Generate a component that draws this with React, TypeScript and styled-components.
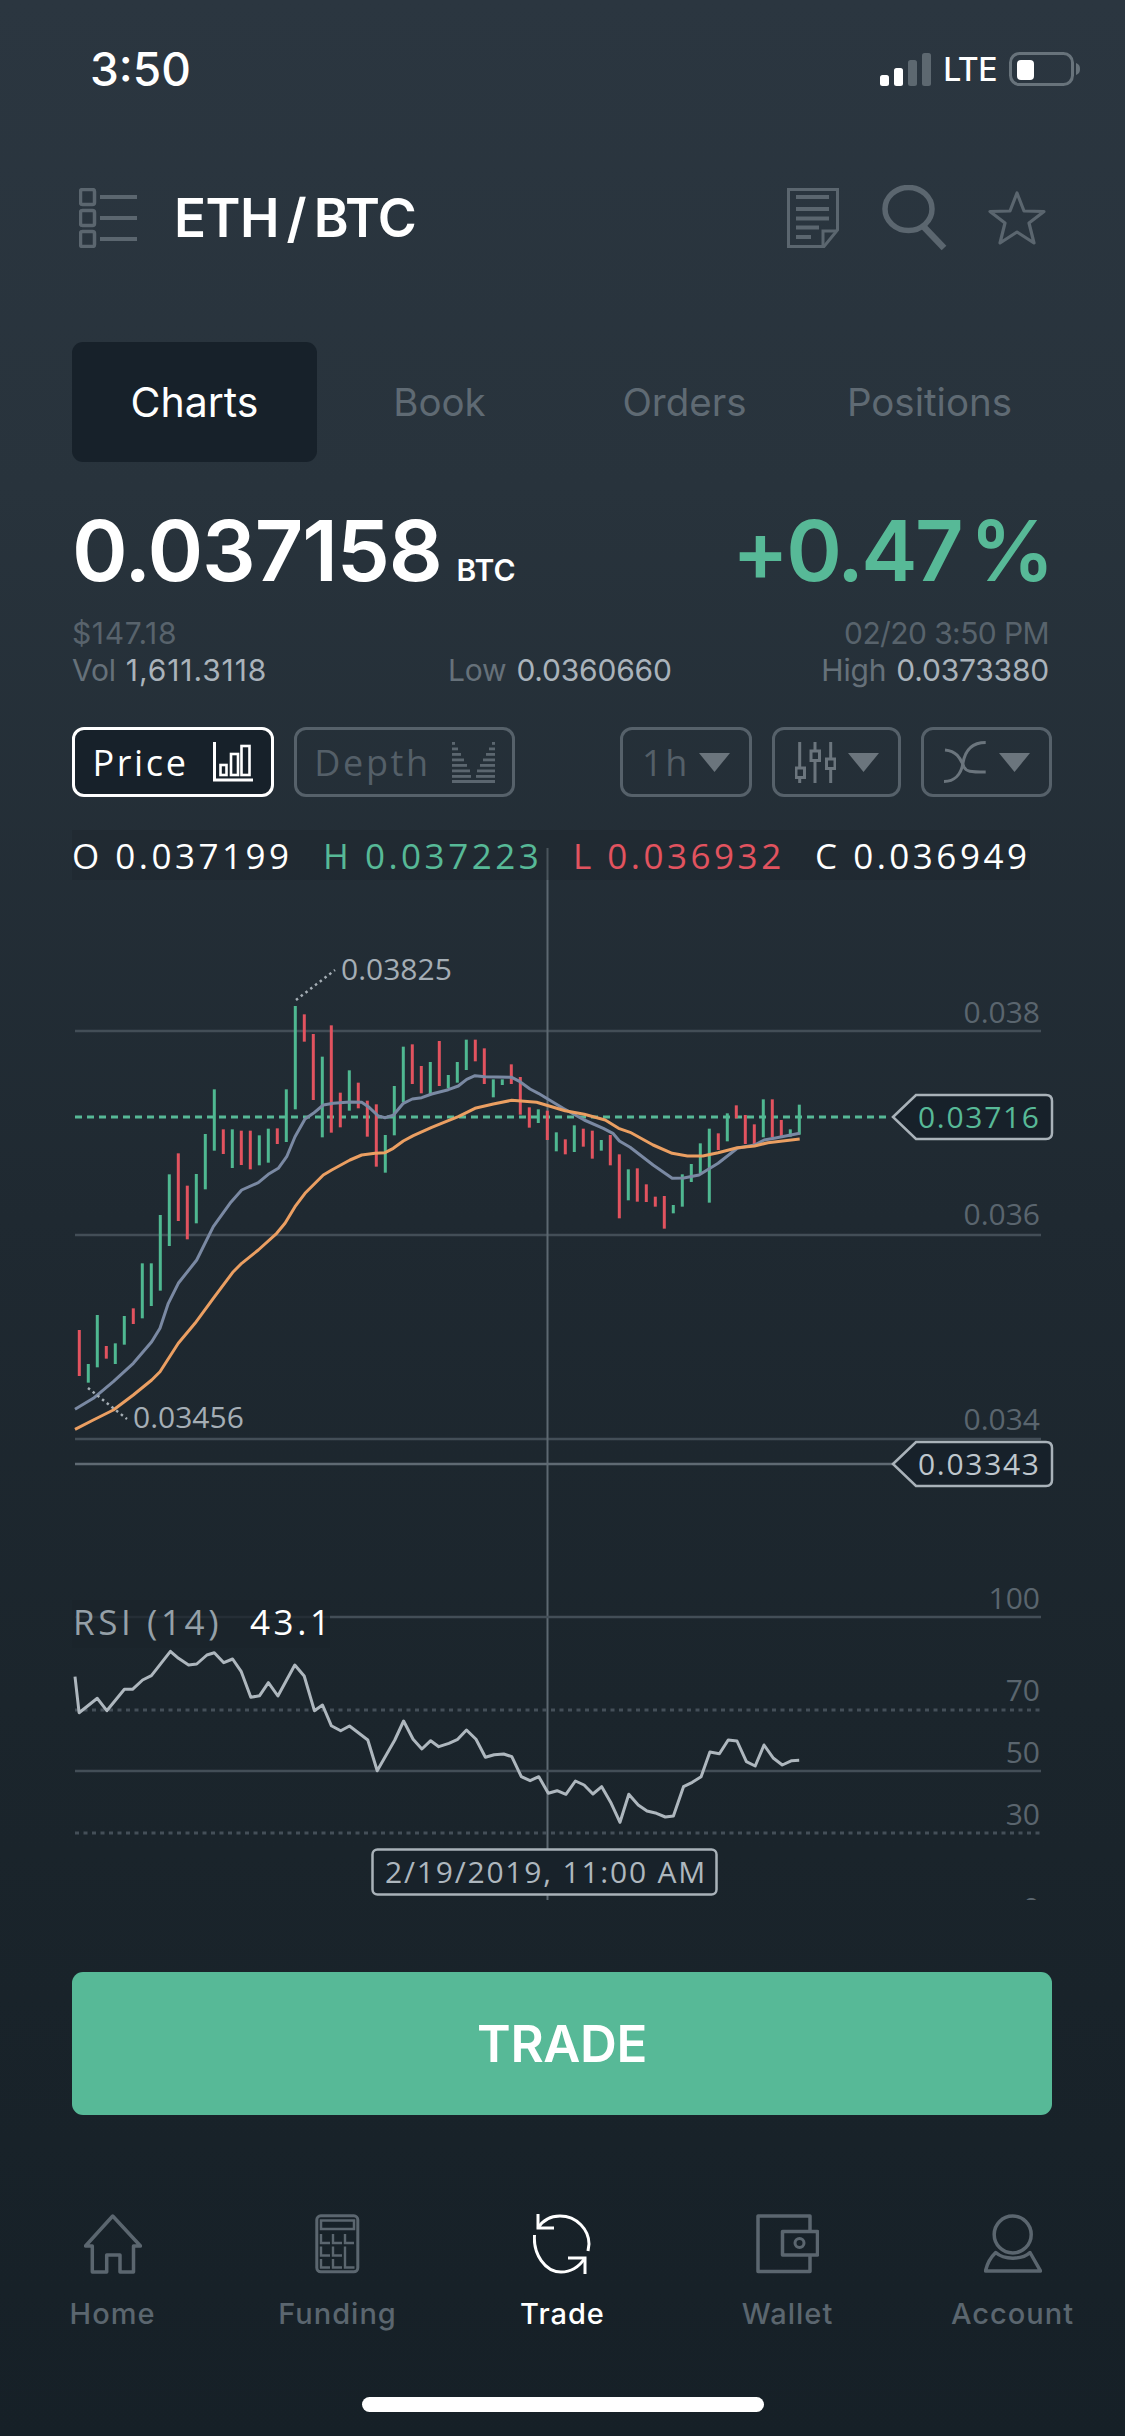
import React from 'react';
import styled, { createGlobalStyle } from 'styled-components';

const GlobalStyle = createGlobalStyle`
  html, body { margin: 0; padding: 0; background: #172027; }
  * { box-sizing: border-box; }
`;

const GREEN = '#57b997';
const RED = '#e2535f';
const ICON = '#5b666f';
const SOFT = '#6b757d';
const UI = `Inter, "Liberation Sans", sans-serif`;
const MONO = `"Open Sans", "Noto Sans", sans-serif`;

const Page = styled.div`
  width: 1125px;
  height: 2436px;
  overflow: hidden;
  display: flex;
  flex-direction: column;
  font-family: ${UI};
  color: #fff;
  background: linear-gradient(180deg, #2b3640 0%, #28333c 20%, #1f2931 50%, #1b252c 70%, #162027 100%);
`;
const StatusBar = styled.div`
  height: 138px;
  padding: 0 44px 0 90px;
  display: flex;
  align-items: center;
  justify-content: space-between;
`;
const Clock = styled.span`
  font-size: 46px;
  font-weight: 500;
`;
const StatusRight = styled.div`
  display: flex;
  align-items: center;
  gap: 12px;
`;
const Lte = styled.span`
  font-size: 32px;
  font-weight: 500;
  letter-spacing: -0.5px;
`;
const Header = styled.div`
  height: 160px;
  padding: 0 79px;
  display: flex;
  align-items: center;
  justify-content: space-between;
`;
const HeaderLeft = styled.div`
  display: flex;
  align-items: center;
  gap: 37px;
`;
const Title = styled.h1`
  margin: 0;
  font-size: 53px;
  font-weight: 600;
  letter-spacing: -0.6px;
  word-spacing: -5px;
`;
const HeaderIcons = styled.div`
  display: flex;
  align-items: center;
  gap: 40px;
`;
const DocSlot = styled.div`
  display: flex;
  margin-right: 3px;
`;
const Tabs = styled.div`
  margin: 44px 73px 0 72px;
  display: grid;
  grid-template-columns: repeat(4, 245px);
`;
const Tab = styled.div<{ $active?: boolean }>`
  height: 120px;
  display: flex;
  align-items: center;
  justify-content: center;
  font-size: ${p => (p.$active ? 41 : 38.5)}px;
  border-radius: 11px;
  color: ${p => (p.$active ? '#fff' : '#5f6a73')};
  background: ${p => (p.$active ? '#17212a' : 'transparent')};
`;
const PriceRow = styled.div`
  margin: 38px 73px 0 72px;
  height: 100px;
  display: flex;
  align-items: center;
  justify-content: space-between;
`;
const PriceMain = styled.div`
  display: flex;
  align-items: baseline;
  gap: 15px;
`;
const BigNumber = styled.span<{ $green?: boolean }>`
  font-size: 84.5px;
  line-height: 100px;
  font-weight: 600;
  letter-spacing: ${p => (p.$green ? -2.6 : -1.2)}px;
  word-spacing: -10px;
  color: ${p => (p.$green ? GREEN : '#fff')};
`;
const Unit = styled.span`
  font-size: 30px;
  font-weight: 600;
`;
const Stats = styled.div`
  margin: 15px 76px 0 72px;
  display: flex;
  flex-direction: column;
  font-size: 30px;
  line-height: 37px;
  letter-spacing: -0.2px;
`;
const StatFirst = styled.div`
  display: flex;
  justify-content: space-between;
  color: #58636c;
`;
const StatUsd = styled.span`
  letter-spacing: 0.6px;
`;
const StatDate = styled.span`
  letter-spacing: -0.6px;
`;
const StatSecond = styled.div`
  display: grid;
  grid-template-columns: 376px 1fr auto;
  color: #66717a;
`;
const StatValue = styled.span<{ $wide?: boolean }>`
  color: #aab3bb;
  margin-left: 10px;
  letter-spacing: ${p => (p.$wide ? 0.9 : -0.2)}px;
`;
const Toolbar = styled.div`
  margin: 38px 73px 0 72px;
  display: flex;
  justify-content: space-between;
`;
const ToolGroup = styled.div`
  display: flex;
  gap: 20px;
`;
const ToolButton = styled.div<{ $active?: boolean; $width: number; $gap: number }>`
  width: ${p => p.$width}px;
  height: 70px;
  display: flex;
  align-items: center;
  justify-content: center;
  gap: ${p => p.$gap}px;
  border-radius: 12px;
  border: 3px solid ${p => (p.$active ? '#fff' : '#56616a')};
  background: ${p => (p.$active ? '#17212a' : 'transparent')};
  color: ${p => (p.$active ? '#fff' : '#545f68')};
  font-family: ${MONO};
  font-size: 36px;
  letter-spacing: 2.6px;
`;
const ChartArea = styled.div`
  position: relative;
  margin-top: 33px;
  height: 1070px;
`;
const ChartSvg = styled.svg`
  display: block;
`;
const Ohlc = styled.div`
  position: absolute;
  top: 0;
  left: 72px;
  width: 958px;
  height: 50px;
  display: flex;
  align-items: center;
  background: rgba(24, 32, 39, 0.28);
  font-family: ${MONO};
  font-size: 35px;
  letter-spacing: 3.5px;
`;
const OhlcItem = styled.span<{ $color: string; $width: number }>`
  width: ${p => p.$width}px;
  color: ${p => p.$color};
  white-space: pre;
`;
const ChartText = styled.text<{ $color: string; $size?: number; $spacing?: number }>`
  font-family: ${MONO};
  font-size: ${p => p.$size ?? 30}px;
  letter-spacing: ${p => p.$spacing ?? 0}px;
  fill: ${p => p.$color};
`;
const TradeButton = styled.div`
  margin: 72px 73px 0 72px;
  height: 143px;
  border-radius: 11px;
  background: ${GREEN};
  display: flex;
  align-items: center;
  justify-content: center;
  font-size: 51px;
  font-weight: 600;
  letter-spacing: -0.4px;
`;
const Nav = styled.div`
  margin-top: 99px;
  display: grid;
  grid-template-columns: repeat(5, 225px);
`;
const NavItem = styled.div<{ $active?: boolean }>`
  display: flex;
  flex-direction: column;
  align-items: center;
  gap: 22px;
  font-size: 29px;
  font-weight: 500;
  letter-spacing: 1px;
  line-height: 36px;
  color: ${p => (p.$active ? '#fff' : '#5b666f')};
`;
const HomeIndicator = styled.div`
  margin: 65px auto 0;
  width: 402px;
  height: 15px;
  border-radius: 8px;
  background: #fff;
`;

const Signal = () => (
  <svg width="51" height="33" viewBox="0 0 51 33">
    <rect x="0" y="22" width="9" height="11" rx="2.5" fill="#fff" />
    <rect x="14" y="15" width="9" height="18" rx="2.5" fill="#fff" />
    <rect x="28" y="7" width="9" height="26" rx="2.5" fill="#5d6870" />
    <rect x="42" y="0" width="9" height="33" rx="2.5" fill="#5d6870" />
  </svg>
);
const Battery = () => (
  <svg width="72" height="34" viewBox="0 0 72 34">
    <rect x="1.5" y="1.5" width="62" height="31" rx="9" fill="none" stroke="#68737b" strokeWidth="3" />
    <rect x="8" y="8" width="17" height="20" rx="4" fill="#fff" />
    <path d="M67 11 C70 12 71 14 71 17 C71 20 70 22 67 23 Z" fill="#68737b" />
  </svg>
);
const MenuIcon = () => (
  <svg width="58" height="60" viewBox="0 0 58 60">
    {[1, 22, 43].map(y => (
      <React.Fragment key={y}>
        <rect x="1.5" y={y + 0.5} width="14" height="15" rx="2" fill="none" stroke={ICON} strokeWidth="3.5" />
        <rect x="21" y={y + 6} width="37" height="4" fill={ICON} />
      </React.Fragment>
    ))}
  </svg>
);
const DocIcon = () => (
  <svg width="52" height="60" viewBox="0 0 52 60">
    <path d="M1.5 1.5 H50.5 V42 L37 58.5 H1.5 Z" fill="none" stroke={ICON} strokeWidth="3" />
    <path d="M36 57 V43 H50" fill="none" stroke={ICON} strokeWidth="3" />
    {[[9, 42, 9], [9, 42, 21], [9, 42, 30.5], [9, 32, 39.5], [9, 24, 49]].map(([a, b, y]) => (
      <rect key={y} x={a} y={y - 2} width={b - a} height="4" fill={ICON} />
    ))}
  </svg>
);
const SearchIcon = () => (
  <svg width="66" height="66" viewBox="0 0 66 66">
    <ellipse cx="26.5" cy="24" rx="23.5" ry="21.5" fill="none" stroke={ICON} strokeWidth="5.5" />
    <path d="M41 41 L62 63" fill="none" stroke={ICON} strokeWidth="6.5" />
  </svg>
);
const StarIcon = () => (
  <svg width="58" height="56" viewBox="0 0 58 56">
    <path d="M29 3 L36 21 L56 21.5 L41 33 L46 53 L29 42 L12 53 L17 33 L2 21.5 L22 21 Z" fill="none" stroke={ICON} strokeWidth="3.2" strokeLinejoin="round" />
  </svg>
);
const BarsIcon = () => (
  <svg width="40" height="40" viewBox="0 0 40 40">
    <path d="M1.5 0 V38 H40" fill="none" stroke="#fff" strokeWidth="3" />
    <rect x="7.5" y="23" width="6" height="10" fill="none" stroke="#fff" strokeWidth="2.6" />
    <rect x="18" y="12" width="7" height="21" fill="none" stroke="#fff" strokeWidth="2.6" />
    <rect x="28.5" y="4" width="8" height="29" fill="none" stroke="#fff" strokeWidth="2.6" />
  </svg>
);
const DepthIcon = () => {
  const rows: [number, number][] = [
    [1, 3], [6.5, 6], [12, 9], [17.5, 12], [23, 15], [28.5, 18], [34, 19],
  ];
  return (
    <svg width="43" height="42" viewBox="0 0 43 42">
      {rows.map(([y, w]) => (
        <React.Fragment key={y}>
          <rect x="0" y={y} width={w} height="2.8" fill={ICON} />
          <rect x={43 - w} y={y} width={w} height="2.8" fill={ICON} />
        </React.Fragment>
      ))}
      <rect x="0" y="39" width="43" height="3" fill={ICON} />
    </svg>
  );
};
const Caret = () => (
  <svg width="31" height="19" viewBox="0 0 31 19">
    <path d="M0 0 H31 L15.5 19 Z" fill={SOFT} />
  </svg>
);
const SlidersIcon = () => (
  <svg width="41" height="41" viewBox="0 0 41 41" fill="none" stroke={SOFT} strokeWidth="3">
    <path d="M4.7 0 V26 M4.7 36 V41 M20 0 V9 M20 18 V41 M35.7 0 V17 M35.7 27 V41" />
    <rect x="1" y="26" width="8.5" height="9.5" />
    <rect x="16" y="9" width="8.5" height="9.5" />
    <rect x="31.5" y="17" width="8.5" height="9.5" />
  </svg>
);
const CurveIcon = () => (
  <svg width="42" height="42" viewBox="0 0 42 42" fill="none" stroke={SOFT} strokeWidth="3">
    <path d="M41.7 1.5 C28 1.5 21 10 19 22 C17 34 10 40.5 0 40.5" />
    <path d="M1 9 C12 10 16 16 20 26 C22 30.5 26 31 41.7 31" />
  </svg>
);
const HomeIcon = () => (
  <svg width="58" height="60" viewBox="0 0 58 60">
    <path d="M28.7 2 L1.5 32 H8.3 V58 H22.7 V41 H36 V58 H49.5 V32 H56.5 Z" fill="none" stroke={ICON} strokeWidth="3.5" strokeLinejoin="round" />
  </svg>
);
const CalcIcon = () => (
  <svg width="45" height="60" viewBox="0 0 45 60">
    <rect x="1.8" y="1.8" width="41" height="56" rx="4" fill="none" stroke={ICON} strokeWidth="3" />
    <rect x="6" y="6.5" width="33" height="8.5" fill="none" stroke={ICON} strokeWidth="2.5" />
    <g fill="none" stroke={ICON} strokeWidth="2.4">
      {[20, 32.5].map(y =>
        [6, 18, 30].map(x =>
          y > 30 && x === 30 ? null : <path key={`${x}-${y}`} d={`M${x} ${y} V${y + 9} H${x + 9}`} />,
        ),
      )}
      {[6, 18].map(x => <path key={x} d={`M${x} 45 V53.5 H${x + 9}`} />)}
      <path d="M30 32.5 V53.5 H39.5" />
    </g>
  </svg>
);
const TradeIcon = () => (
  <svg width="60" height="60" viewBox="0 0 60 60" fill="none" stroke="#fff" strokeWidth="3">
    <path d="M5 0 V14 H21" />
    <path d="M5 14 C10 6 18 2 27 2 C44 2 56 16 56 30 L55 37" />
    <path d="M35 44 H52 V60" />
    <path d="M1.5 21 C0 40 12 58 28 58 C38 58 46 53 52 44" />
  </svg>
);
const WalletIcon = () => (
  <svg width="63" height="60" viewBox="0 0 63 60">
    <path d="M54 17.5 V2 H2 V57.5 H54 V41" fill="none" stroke={ICON} strokeWidth="3.5" strokeLinejoin="round" />
    <rect x="26.5" y="17.5" width="35" height="23.5" fill="none" stroke={ICON} strokeWidth="3.5" strokeLinejoin="round" />
    <circle cx="43.5" cy="29" r="4.5" fill="none" stroke={ICON} strokeWidth="3" />
  </svg>
);
const AccountIcon = () => (
  <svg width="58" height="60" viewBox="0 0 58 60">
    <circle cx="28.7" cy="20.5" r="18.5" fill="none" stroke={ICON} strokeWidth="3.5" />
    <path d="M11.7 38.5 C20 46 38 46 46 38.5 L56.5 57 H1.5 C3 50 7 43 11.7 38.5 Z" fill="none" stroke={ICON} strokeWidth="3.5" strokeLinejoin="round" />
  </svg>
);

type Candle = [number, number, 'g' | 'r'];
const candles: Candle[] = [
  [1170, 1308, 'r'], [1272, 1328, 'g'], [1125, 1282, 'g'], [1218, 1256, 'r'], [1210, 1272, 'g'], [1128, 1214, 'g'],
  [1105, 1152, 'r'], [970, 1135, 'g'], [970, 1098, 'g'], [825, 1052, 'g'], [703, 918, 'g'], [640, 843, 'r'],
  [737, 898, 'r'], [702, 850, 'g'], [582, 748, 'g'], [448, 632, 'g'], [568, 642, 'r'], [568, 684, 'g'],
  [572, 675, 'r'], [572, 688, 'r'], [586, 676, 'g'], [566, 668, 'g'], [565, 612, 'r'], [448, 606, 'g'],
  [198, 508, 'g'], [223, 305, 'r'], [282, 480, 'r'], [350, 592, 'g'], [256, 578, 'r'], [458, 562, 'r'],
  [391, 512, 'g'], [428, 505, 'r'], [482, 590, 'r'], [493, 680, 'r'], [585, 698, 'g'], [438, 586, 'g'],
  [320, 486, 'g'], [313, 432, 'r'], [378, 460, 'r'], [366, 465, 'g'], [303, 438, 'r'], [405, 445, 'g'],
  [366, 428, 'g'], [299, 390, 'g'], [299, 364, 'r'], [325, 432, 'r'], [418, 472, 'g'], [418, 435, 'g'],
  [373, 432, 'r'], [411, 524, 'r'], [502, 563, 'r'], [508, 549, 'g'], [512, 600, 'r'],
  [577, 634, 'g'], [598, 643, 'r'], [556, 636, 'g'], [566, 620, 'r'], [572, 656, 'r'], [600, 632, 'g'],
  [585, 676, 'r'], [643, 835, 'r'], [688, 781, 'g'], [685, 785, 'r'], [733, 786, 'r'], [770, 800, 'r'],
  [768, 866, 'r'], [795, 820, 'g'], [703, 800, 'g'], [672, 726, 'g'], [610, 700, 'g'], [566, 788, 'g'],
  [580, 630, 'r'], [520, 604, 'g'], [496, 535, 'r'], [525, 612, 'r'], [553, 612, 'r'], [478, 592, 'g'],
  [478, 592, 'r'], [540, 590, 'r'], [568, 590, 'g'], [494, 584, 'g'],
];

const toPath = (pts: number[][], fx: (x: number) => number, fy: (y: number) => number) =>
  pts.map(([x, y], i) => `${i ? 'L' : 'M'}${fx(x).toFixed(1)} ${fy(y).toFixed(1)}`).join(' ');
const z3x = (x: number) => 50 + x / 3;
const z4x = (x: number) => 500 + x / 2.613;
const zy = (y: number) => 940 + y / 3;
const z5x = (x: number) => 50 + x / 1.479;
const z5y = (y: number) => 1560 + y / 3;

const blue3 = [[75, 1408], [130, 1375], [190, 1325], [250, 1270], [305, 1205], [330, 1165], [355, 1090], [385, 1030], [440, 960], [490, 860], [540, 790], [575, 750], [625, 728], [655, 703], [685, 685], [710, 650], [735, 590], [765, 537], [790, 520], [820, 495], [850, 490], [900, 486], [935, 487], [955, 500], [985, 528], [1005, 533], [1030, 526], [1060, 490], [1087, 477], [1115, 473], [1145, 462], [1195, 449], [1225, 438], [1250, 418], [1275, 407], [1305, 410], [1385, 412], [1410, 425], [1440, 447], [1465, 460]];
const blue4 = [[125, 477], [165, 505], [220, 540], [270, 565], [295, 580], [312, 603], [340, 622], [400, 675], [450, 715], [480, 714], [520, 705], [570, 670], [620, 625], [665, 615], [690, 600], [720, 594], [783, 580]];
const orange3 = [[75, 1468], [130, 1440], [190, 1410], [250, 1365], [305, 1320], [330, 1295], [385, 1210], [435, 1150], [490, 1075], [550, 995], [575, 970], [625, 930], [680, 880], [705, 850], [735, 800], [765, 760], [820, 705], [845, 690], [900, 660], [935, 645], [975, 640], [1005, 638], [1030, 625], [1060, 603], [1090, 587], [1145, 562], [1195, 542], [1225, 530], [1275, 505], [1330, 492], [1385, 481], [1460, 487]];
const orange4 = [[100, 488], [170, 512], [220, 523], [275, 540], [310, 565], [340, 577], [400, 615], [450, 640], [490, 648], [530, 648], [570, 638], [620, 623], [665, 618], [700, 608], [783, 597]];
const rsi = [[37, 350], [43, 458], [70, 415], [84, 452], [110, 388], [122, 388], [137, 360], [150, 347], [178, 274], [190, 295], [205, 315], [217, 312], [232, 285], [243, 278], [257, 308], [270, 297], [283, 335], [297, 412], [310, 407], [323, 368], [337, 408], [362, 315], [376, 348], [391, 452], [403, 435], [416, 497], [430, 512], [443, 498], [457, 520], [470, 540], [484, 632], [510, 540], [523, 483], [537, 538], [550, 567], [563, 542], [575, 560], [590, 550], [603, 538], [616, 510], [630, 538], [644, 592], [657, 584], [671, 582], [683, 590], [697, 650], [710, 662], [723, 650], [737, 700], [750, 692], [763, 703], [777, 663], [790, 675], [803, 702], [816, 680], [830, 730], [843, 787], [856, 703], [870, 735], [883, 753], [897, 760], [910, 771], [922, 768], [937, 680], [950, 667], [963, 650], [976, 576], [990, 581], [1003, 540], [1016, 543], [1030, 605], [1043, 618], [1056, 555], [1070, 595], [1083, 615], [1097, 602], [1108, 601]];

const bluePath = toPath(blue3, z3x, zy) + ' ' + toPath(blue4, z4x, zy).replace('M', 'L');
const orangePath = toPath(orange3, z3x, zy) + ' ' + toPath(orange4, z4x, zy).replace('M', 'L');
const rsiPath = toPath(rsi, z5x, z5y);

const PriceTag = ({ y, color, text }: { y: number; color: string; text: string }) => (
  <>
    <path
      d={`M893 ${y} L916 ${y - 22} H1046 Q1052 ${y - 22} 1052 ${y - 16} V${y + 16} Q1052 ${y + 22} 1046 ${y + 22} H916 Z`}
      fill="#17212a"
      stroke="#a9b2b9"
      strokeWidth="2.5"
    />
    <ChartText x="918" y={y + 11} $color={color} $spacing={1.7}>{text}</ChartText>
  </>
);

const Chart = () => (
  <ChartSvg width="1125" height="1070" viewBox="0 830 1125 1070">
    {[1031, 1235, 1439].map(y => (
      <path key={y} d={`M75 ${y} H1041`} stroke="#434e57" strokeWidth="2.5" />
    ))}
    <path d="M547.5 848 V1900" stroke="#5d6871" strokeWidth="2" />
    <path d="M75 1117 H890" stroke={GREEN} strokeWidth="3" strokeDasharray="7 5" />
    <path d="M75 1464 H893" stroke="#5f6a73" strokeWidth="2.5" />
    {candles.map(([t, b, c], i) => (
      <rect
        key={i}
        x={79.3 + 9 * i - 1.5}
        y={zy(t)}
        width="3"
        height={(b - t) / 3}
        fill={c === 'g' ? '#4fb891' : RED}
      />
    ))}
    <path d={bluePath} fill="none" stroke="#7a89a3" strokeWidth="3" strokeLinejoin="round" />
    <path d={orangePath} fill="none" stroke="#eb9f62" strokeWidth="3" strokeLinejoin="round" />
    <path d="M296 1000 L335 970" stroke="#a5aeb5" strokeWidth="2.5" strokeDasharray="2.5 3.5" />
    <path d="M88 1388 L127 1419" stroke="#a5aeb5" strokeWidth="2.5" strokeDasharray="2.5 3.5" />
    <ChartText x="341" y="980" $color="#a5aeb5">0.03825</ChartText>
    <ChartText x="133" y="1428" $color="#a5aeb5">0.03456</ChartText>
    {[['0.038', 1023], ['0.036', 1225], ['0.034', 1430]].map(([t, y]) => (
      <ChartText key={t} x="1040" y={y} textAnchor="end" $color="#5a656e">{t}</ChartText>
    ))}
    <PriceTag y={1117} color={GREEN} text="0.03716" />
    <PriceTag y={1464} color="#bfc7cd" text="0.03343" />

    <path d="M75 1617 H1041" stroke="#434e57" strokeWidth="2.5" />
    <path d="M75 1771 H1041" stroke="#434e57" strokeWidth="2.5" />
    <path d="M75 1710 H1041" stroke="#444f58" strokeWidth="3" strokeDasharray="4 4.5" />
    <path d="M75 1833 H1041" stroke="#444f58" strokeWidth="3" strokeDasharray="4 4.5" />
    {[['100', 1609], ['70', 1701], ['50', 1763], ['30', 1825], ['0', 1919]].map(([t, y]) => (
      <ChartText key={t} x="1040" y={y} textAnchor="end" $color="#5a656e">{t}</ChartText>
    ))}
    <rect x="72" y="1600" width="258" height="48" fill="#1b242b" fillOpacity="0.75" />
    <ChartText x="73" y="1635" $color="#95a0a8" $size={35} $spacing={3.6}>RSI (14)</ChartText>
    <ChartText x="250" y="1635" $color="#fff" $size={35} $spacing={3.6}>43.1</ChartText>
    <path d={rsiPath} fill="none" stroke="#aeb7be" strokeWidth="3" strokeLinejoin="round" />
    <rect x="372.5" y="1849.5" width="344" height="45" rx="5" fill="#18222a" stroke="#a9b2b9" strokeWidth="2.5" />
    <ChartText x="385" y="1883" $color="#aeb7be" $spacing={1.8}>2/19/2019, 11:00 AM</ChartText>
  </ChartSvg>
);

export default function App() {
  return (
    <Page>
      <GlobalStyle />
      <StatusBar>
        <Clock>3:50</Clock>
        <StatusRight>
          <Signal />
          <Lte>LTE</Lte>
          <Battery />
        </StatusRight>
      </StatusBar>
      <Header>
        <HeaderLeft>
          <MenuIcon />
          <Title>ETH / BTC</Title>
        </HeaderLeft>
        <HeaderIcons>
          <DocSlot><DocIcon /></DocSlot>
          <SearchIcon />
          <StarIcon />
        </HeaderIcons>
      </Header>
      <Tabs>
        <Tab $active>Charts</Tab>
        <Tab>Book</Tab>
        <Tab>Orders</Tab>
        <Tab>Positions</Tab>
      </Tabs>
      <PriceRow>
        <PriceMain>
          <BigNumber>0.037158</BigNumber>
          <Unit>BTC</Unit>
        </PriceMain>
        <BigNumber $green>+0.47 %</BigNumber>
      </PriceRow>
      <Stats>
        <StatFirst>
          <StatUsd>$147.18</StatUsd>
          <StatDate>02/20 3:50 PM</StatDate>
        </StatFirst>
        <StatSecond>
          <span>Vol<StatValue $wide>1,611.3118</StatValue></span>
          <span>Low<StatValue>0.0360660</StatValue></span>
          <span>High<StatValue>0.0373380</StatValue></span>
        </StatSecond>
      </Stats>
      <Toolbar>
        <ToolGroup>
          <ToolButton $active $width={202} $gap={25}>Price<BarsIcon /></ToolButton>
          <ToolButton $width={221} $gap={21}>Depth<DepthIcon /></ToolButton>
        </ToolGroup>
        <ToolGroup>
          <ToolButton $width={132} $gap={9}>1h<Caret /></ToolButton>
          <ToolButton $width={129} $gap={12}><SlidersIcon /><Caret /></ToolButton>
          <ToolButton $width={131} $gap={13}><CurveIcon /><Caret /></ToolButton>
        </ToolGroup>
      </Toolbar>
      <ChartArea>
        <Chart />
        <Ohlc>
          <OhlcItem $color="#fff" $width={251}>O 0.037199</OhlcItem>
          <OhlcItem $color={GREEN} $width={250}>H 0.037223</OhlcItem>
          <OhlcItem $color={RED} $width={242}>L 0.036932</OhlcItem>
          <OhlcItem $color="#fff" $width={215}>C 0.036949</OhlcItem>
        </Ohlc>
      </ChartArea>
      <TradeButton>TRADE</TradeButton>
      <Nav>
        <NavItem><HomeIcon />Home</NavItem>
        <NavItem><CalcIcon />Funding</NavItem>
        <NavItem $active><TradeIcon />Trade</NavItem>
        <NavItem><WalletIcon />Wallet</NavItem>
        <NavItem><AccountIcon />Account</NavItem>
      </Nav>
      <HomeIndicator />
    </Page>
  );
}
